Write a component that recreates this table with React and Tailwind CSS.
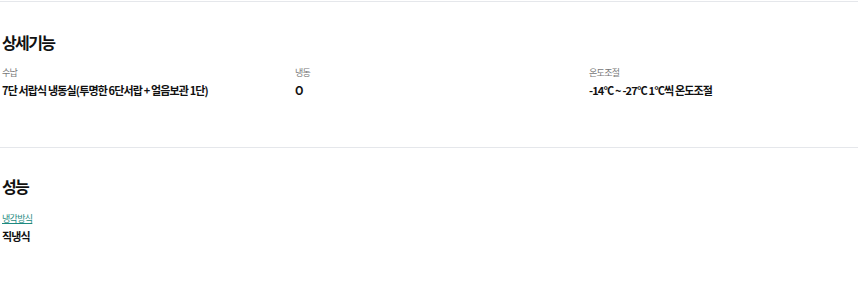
export default function App() {
  const specs = [
    { label: '수납', value: '7단 서랍식 냉동실(투명한 6단서랍 + 얼음보관 1단)' },
    { label: '냉동', value: 'O' },
    { label: '온도조절', value: '-14°C ~ -27°C 1°C씩 온도조절' },
  ]

  return (
    <div className="bg-white w-[860px] h-[294px] pt-px pr-[2px] text-[#111]" style={{ fontFamily: '"Noto Sans CJK KR", "Noto Sans", sans-serif' }}>
      <section className="border-t border-gray-200 pt-[28px] pb-[49px] pl-[2px]">
        <h2 className="text-[16px] leading-[24px] font-bold tracking-[-1.6px]">상세기능</h2>
        <div className="grid grid-cols-[293px_294px_1fr] mt-[12px]">
          {specs.map((s) => (
            <div key={s.label} className="flex flex-col">
              <span className="text-[9px] leading-[14px] text-[#777] tracking-[-0.7px]">{s.label}</span>
              <span className="mt-[2px] text-[11px] leading-[16px] font-bold tracking-[-0.85px]">{s.value}</span>
            </div>
          ))}
        </div>
      </section>

      <section className="border-t border-gray-200 pt-[26px] pl-[2px]">
        <h2 className="text-[16px] leading-[24px] font-bold tracking-[-1.6px]">성능</h2>
        <div className="flex flex-col mt-[14px]">
          <a href="#" className="text-[9px] leading-[14px] text-[#1d8a80] underline self-start tracking-[-0.7px]">냉각방식</a>
          <span className="mt-[2px] text-[11px] leading-[16px] font-bold tracking-[-0.85px]">직냉식</span>
        </div>
      </section>
    </div>
  )
}
